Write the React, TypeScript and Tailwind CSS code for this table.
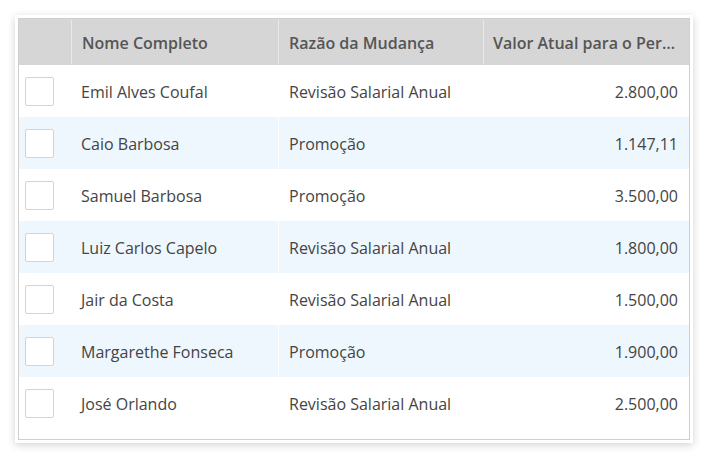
import React from 'react';

const rows = [
  { name: 'Emil Alves Coufal', reason: 'Revisão Salarial Anual', value: '2.800,00' },
  { name: 'Caio Barbosa', reason: 'Promoção', value: '1.147,11' },
  { name: 'Samuel Barbosa', reason: 'Promoção', value: '3.500,00' },
  { name: 'Luiz Carlos Capelo', reason: 'Revisão Salarial Anual', value: '1.800,00' },
  { name: 'Jair da Costa', reason: 'Revisão Salarial Anual', value: '1.500,00' },
  { name: 'Margarethe Fonseca', reason: 'Promoção', value: '1.900,00' },
  { name: 'José Orlando', reason: 'Revisão Salarial Anual', value: '2.500,00' },
];

const cols = 'grid grid-cols-[52px_207px_205px_206px]';

export default function App() {
  return (
    <div className="min-h-screen bg-white p-[15px] font-['Open_Sans',sans-serif] text-[16px]">
      <div className="w-[678px] h-[428px] bg-white p-[3px] shadow-[0_2px_8px_rgba(0,0,0,0.18)]">
        <div className="h-full border border-[#cfcfcf] bg-white">
          {/* header */}
          <div className={`${cols} h-[46px] bg-[#d6d6d6] text-[#555] font-semibold`}>
            <div />
            <div className="flex items-center px-[10px] pt-[2px] border-l border-[#e9e9e9] my-[1px]">Nome Completo</div>
            <div className="flex items-center px-[10px] pt-[2px] border-l border-[#e9e9e9] my-[1px]">Razão da Mudança</div>
            <div className="flex items-center pl-[9px] pt-[2px] border-l border-[#e9e9e9] my-[1px] whitespace-nowrap">
              Valor Atual para o Per…
            </div>
          </div>

          {/* body */}
          {rows.map((r, i) => (
            <div
              key={r.name}
              className={`${cols} h-[52px] text-[#444] ${i % 2 === 1 ? 'bg-[#eef7fd]' : 'bg-white'}`}
            >
              <div className="flex items-center pl-[6px]">
                <div className="w-[29px] h-[29px] rounded-[2px] border border-[#d4d4d4] bg-white" />
              </div>
              <div className="flex items-center px-[10px] pt-[2px]">{r.name}</div>
              <div className="flex items-center px-[10px] pt-[2px] border-l border-white">{r.reason}</div>
              <div className="flex items-center justify-end pr-[11px] pt-[2px]">{r.value}</div>
            </div>
          ))}
        </div>
      </div>
    </div>
  );
}
